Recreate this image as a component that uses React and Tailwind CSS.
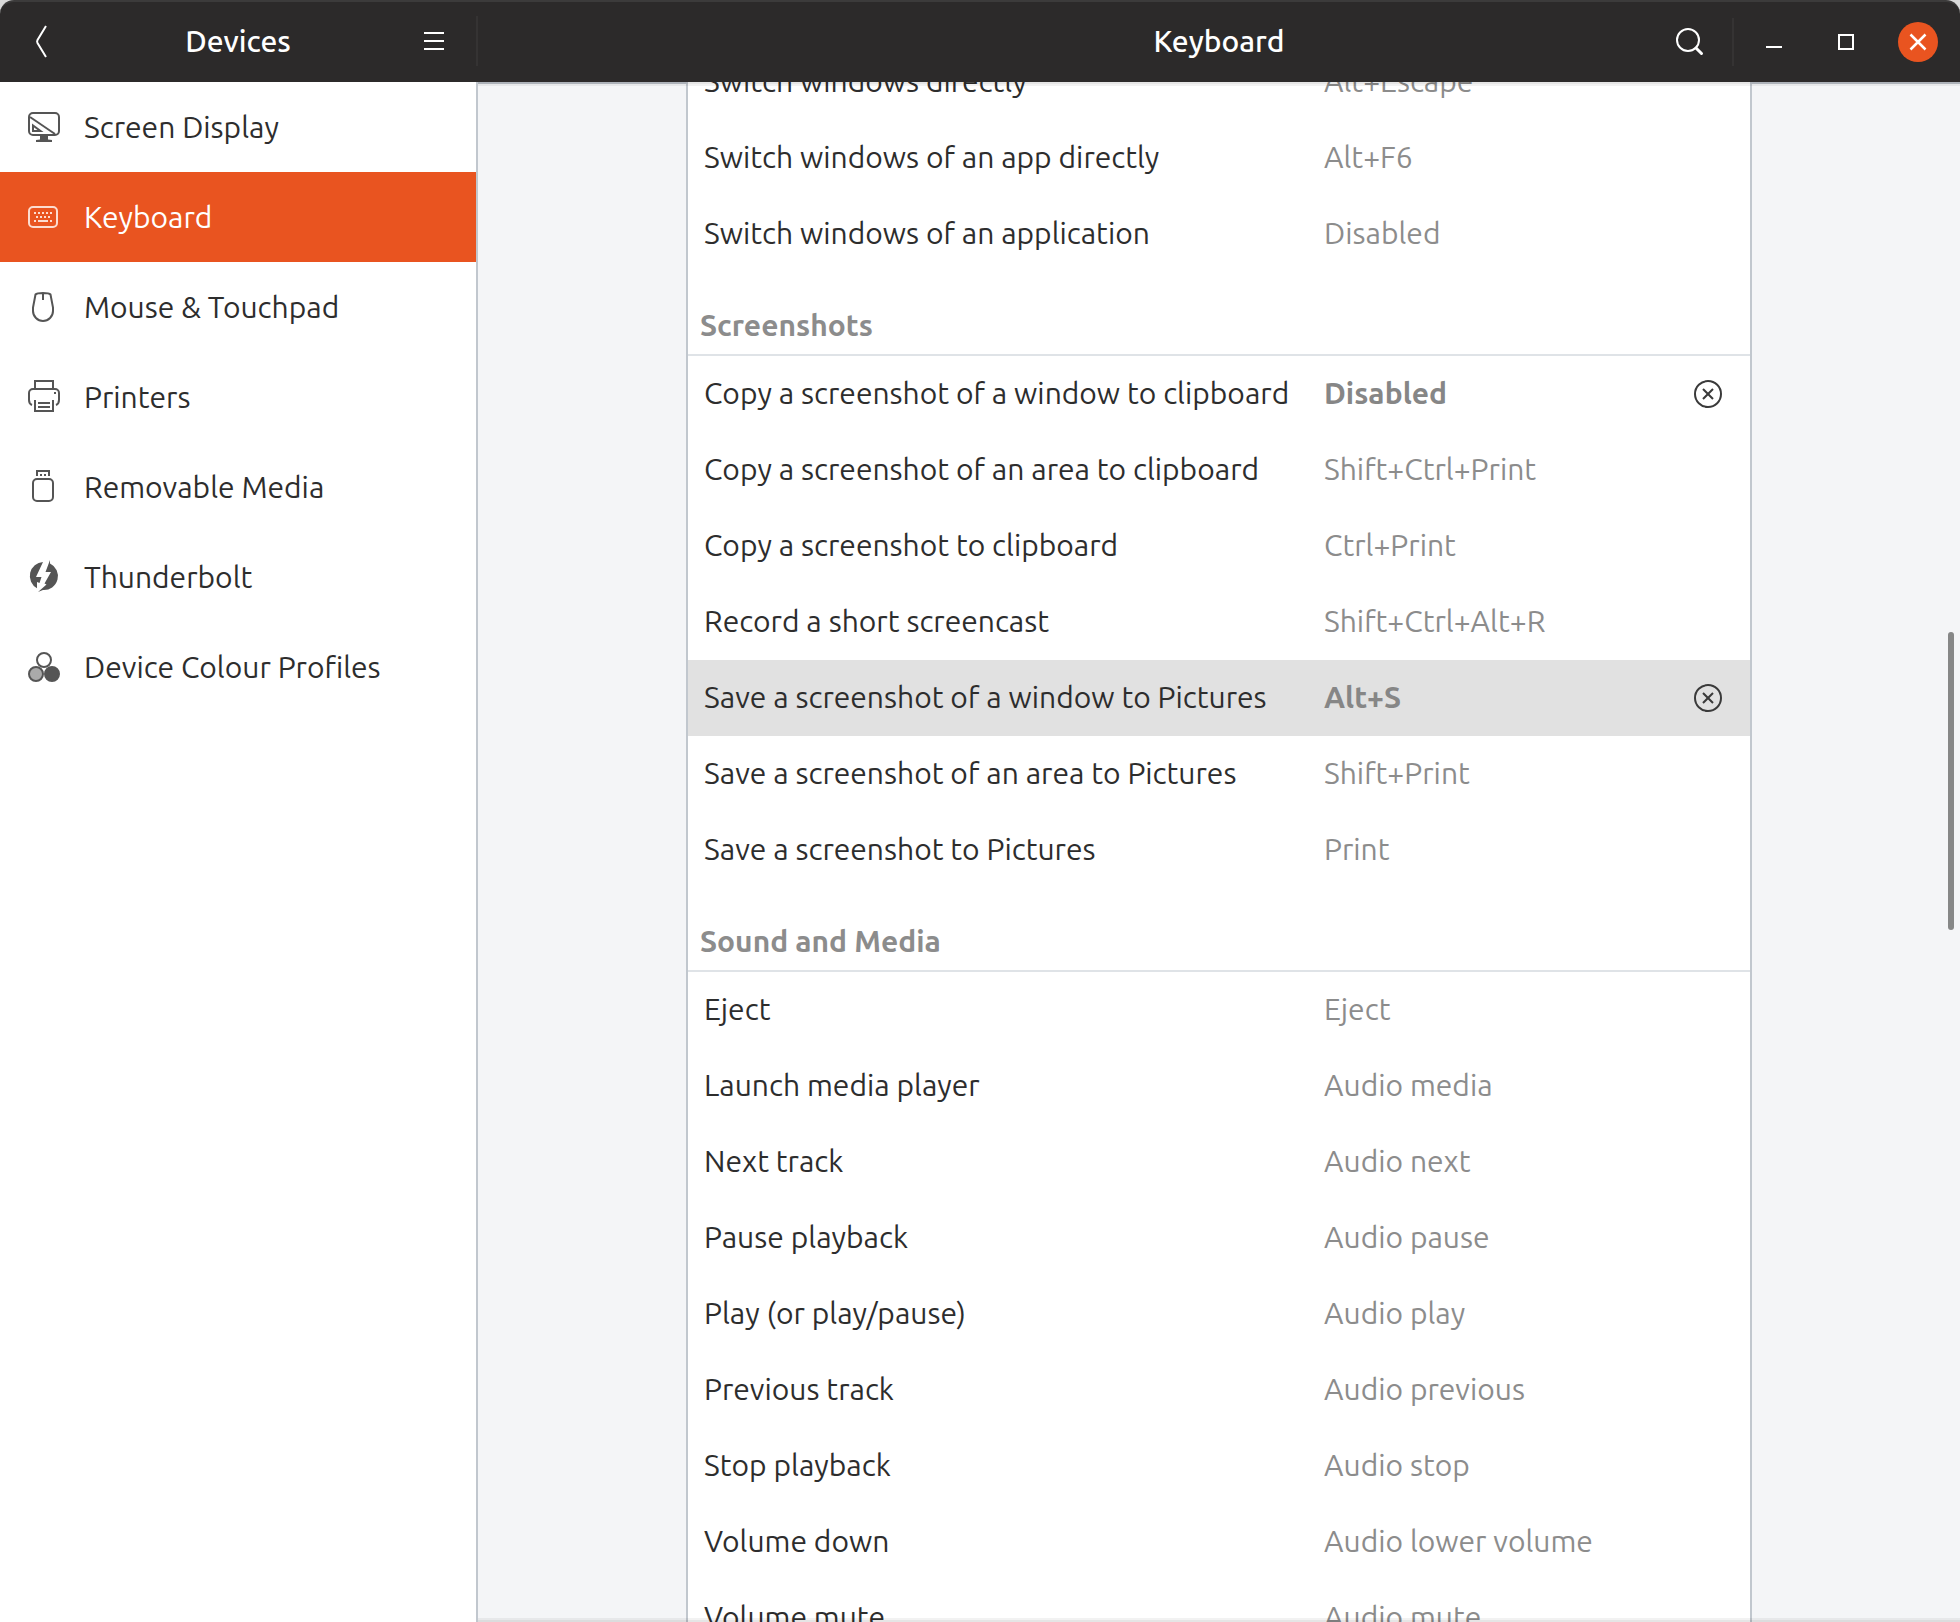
import React, { useEffect, useRef, useState } from "react";

const devices = [
  { name: "Screen Display", Icon: DisplayIcon },
  { name: "Keyboard", Icon: KeyboardIcon },
  { name: "Mouse & Touchpad", Icon: MouseIcon },
  { name: "Printers", Icon: PrinterIcon },
  { name: "Removable Media", Icon: UsbIcon },
  { name: "Thunderbolt", Icon: ThunderboltIcon },
  { name: "Device Colour Profiles", Icon: ColourIcon },
];

const sections = [
  {
    title: null,
    shortcuts: [
      { label: "Switch windows directly", keys: "Alt+Escape" },
      { label: "Switch windows of an app directly", keys: "Alt+F6" },
      { label: "Switch windows of an application", keys: "Disabled" },
    ],
  },
  {
    title: "Screenshots",
    shortcuts: [
      {
        label: "Copy a screenshot of a window to clipboard",
        keys: "Disabled",
        custom: true,
      },
      {
        label: "Copy a screenshot of an area to clipboard",
        keys: "Shift+Ctrl+Print",
      },
      { label: "Copy a screenshot to clipboard", keys: "Ctrl+Print" },
      { label: "Record a short screencast", keys: "Shift+Ctrl+Alt+R" },
      {
        label: "Save a screenshot of a window to Pictures",
        keys: "Alt+S",
        custom: true,
      },
      {
        label: "Save a screenshot of an area to Pictures",
        keys: "Shift+Print",
      },
      { label: "Save a screenshot to Pictures", keys: "Print" },
    ],
  },
  {
    title: "Sound and Media",
    shortcuts: [
      { label: "Eject", keys: "Eject" },
      { label: "Launch media player", keys: "Audio media" },
      { label: "Next track", keys: "Audio next" },
      { label: "Pause playback", keys: "Audio pause" },
      { label: "Play (or play/pause)", keys: "Audio play" },
      { label: "Previous track", keys: "Audio previous" },
      { label: "Stop playback", keys: "Audio stop" },
      { label: "Volume down", keys: "Audio lower volume" },
      { label: "Volume mute", keys: "Audio mute" },
    ],
  },
];

function Icon({ children }) {
  return (
    <svg
      viewBox="0 0 32 32"
      className="w-8 h-8 shrink-0 overflow-visible"
      fill="none"
      stroke="currentColor"
      strokeWidth="2"
      aria-hidden="true"
    >
      {children}
    </svg>
  );
}

function DisplayIcon() {
  return (
    <Icon>
      <rect x="1" y="2" width="30" height="22" rx="4" />
      <path d="M2 6l25 17" />
      <path d="M5 14.5V20h7.5z" />
      <path
        d="M12 25h8v3.5l4 .5v2H8v-2l4-.5z"
        fill="currentColor"
        stroke="none"
      />
    </Icon>
  );
}

function KeyboardIcon() {
  return (
    <Icon>
      <rect x="1" y="6" width="28" height="20" rx="4" />
      <path d="M6 12h2M10 12h2M14 12h2M18 12h2M22 12h2M8 16h2M12 16h2M16 16h2M20 16h2M6 20h2M10 20h10M22 20h2" />
    </Icon>
  );
}

function MouseIcon() {
  return (
    <Icon>
      <path d="M7.5 3.5C8.5 2.4 11 2 15 2s6.5.4 7.5 1.5L25 16.5V20c0 5.5-4.5 10-10 10S5 25.5 5 20v-3.5zM15 2v7" />
    </Icon>
  );
}

function PrinterIcon() {
  return (
    <Icon>
      <path d="M7 8V0h18v8" />
      <path d="M4 24c-2-.8-3-2.5-3-5v-7a4 4 0 0 1 4-4h22a4 4 0 0 1 4 4v7c0 2.5-1 4.2-3 5" />
      <path d="M7 19v11h18V19M10 22h12M10 26h12M26 12h2" />
    </Icon>
  );
}

function UsbIcon() {
  return (
    <Icon>
      <path d="M9 5V0h12v5M12 4h2M16 4h2" />
      <rect x="5" y="8" width="20" height="22" rx="4" />
    </Icon>
  );
}

function ThunderboltIcon() {
  return (
    <Icon>
      <g fill="currentColor" stroke="none">
        <path d="M15 1A14 14 0 0 0 9 27.200V21l2.500 1 2-6H8z" />
        <path d="M22-1l-4.500 12H23l-6.500 11.500 2 1L10 31l5-2A14 14 0 0 0 22 2.400z" />
      </g>
    </Icon>
  );
}

function ColourIcon() {
  return (
    <Icon>
      <circle cx="16" cy="9" r="7" />
      <circle cx="8" cy="23" r="7" fill="#aaaaaa" />
      <circle cx="24" cy="23" r="7" fill="currentColor" />
    </Icon>
  );
}

function ClearIcon() {
  return (
    <svg
      viewBox="0 0 28 28"
      className="w-7 h-7"
      fill="none"
      stroke="currentColor"
      strokeWidth="2"
      aria-hidden="true"
    >
      <circle cx="14" cy="14" r="13" />
      <path d="M9 9l10 10M19 9L9 19" />
    </svg>
  );
}

function HeaderButton({ label, className = "", children }) {
  return (
    <button
      type="button"
      aria-label={label}
      className={`w-10 h-10 flex items-center justify-center rounded-full ${className}`}
    >
      <Icon>{children}</Icon>
    </button>
  );
}

function TitleBar() {
  return (
    <header className="h-[82px] shrink-0 flex bg-[#2c2a2a] text-white rounded-t-[14px] border-t-2 border-[#3c3b3b] font-medium">
      <div className="w-[478px] shrink-0 grid grid-cols-[1fr_auto_1fr] items-center pl-[22px] pr-6 relative">
        <HeaderButton label="Back">
          <path d="M20 0L11.5 14q-.8 1.5 0 3L20 31" />
        </HeaderButton>
        <h1 className="pb-0.5">Devices</h1>
        <HeaderButton label="Menu" className="justify-self-end">
          <path d="M6 7h20M6 15h20M6 23h20" />
        </HeaderButton>
        <span className="absolute right-0 top-[14px] w-[2px] h-[50px] bg-[#353333]" />
      </div>
      <div className="flex-1 grid grid-cols-[1fr_auto_1fr] items-center px-[22px]">
        <h2 className="col-start-2 pb-0.5">Keyboard</h2>
        <div className="justify-self-end flex items-center">
          <HeaderButton label="Search">
            <circle cx="14" cy="14" r="11" />
            <path d="M22 22l5.5 5.5" strokeWidth="3" strokeLinecap="round" />
          </HeaderButton>
          <span className="w-[2px] h-12 bg-[#353333] ml-[22px] mr-5" />
          <div className="flex gap-8">
            <HeaderButton label="Minimise">
              <path d="M8 21h16" />
            </HeaderButton>
            <HeaderButton label="Maximise">
              <path d="M9 9h14v14H9z" />
            </HeaderButton>
            <HeaderButton label="Close" className="bg-[#e95420]">
              <path d="M8.5 8.5l15 15M23.5 8.5l-15 15" strokeWidth="2.5" />
            </HeaderButton>
          </div>
        </div>
      </div>
    </header>
  );
}

function Sidebar({ active, onSelect }) {
  return (
    <nav className="w-[478px] shrink-0 bg-white border-r-2 border-[#c1c7ce]">
      {devices.map(({ name, Icon: DeviceIcon }) => (
        <button
          key={name}
          type="button"
          onClick={() => onSelect(name)}
          className={`w-full h-[90px] flex items-center gap-6 px-7 text-left ${
            active === name ? "bg-[#e95420] text-white" : "text-[#2d2d2d]"
          }`}
        >
          <span
            className={active === name ? "text-[#fcdcd0]" : "text-[#555555]"}
          >
            <DeviceIcon />
          </span>
          {name}
        </button>
      ))}
    </nav>
  );
}

function ShortcutTable({ selected, onSelect }) {
  return (
    <table className="w-full table-fixed border-collapse text-left">
      <colgroup>
        <col className="w-[636px]" />
        <col />
        <col className="w-[84px]" />
      </colgroup>
      {sections.map((section) => (
        <tbody key={section.title || "navigation"}>
          {section.title && (
            <tr className="h-[84px] shadow-[inset_0_-2px_0_#dfe3e7]">
              <th
                colSpan={3}
                scope="colgroup"
                className="pl-3 pt-[22px] font-bold text-[#8c8c8c]"
              >
                {section.title}
              </th>
            </tr>
          )}
          {section.shortcuts.map((shortcut) => (
            <tr
              key={shortcut.label}
              onClick={() => onSelect(shortcut.label)}
              className={`h-[76px] ${
                selected === shortcut.label ? "bg-[#e1e1e1]" : ""
              }`}
            >
              <td className="pl-4 pb-0.5 whitespace-nowrap">
                {shortcut.label}
              </td>
              <td
                className={
                  shortcut.custom
                    ? "pb-0.5 font-bold text-[#868686]"
                    : "pb-0.5 text-[#8c8c8c]"
                }
              >
                {shortcut.keys}
              </td>
              <td className="pl-7">
                {shortcut.custom && (
                  <button
                    type="button"
                    aria-label={`Reset ${shortcut.label}`}
                    className="block text-[#3a3a3a]"
                  >
                    <ClearIcon />
                  </button>
                )}
              </td>
            </tr>
          ))}
        </tbody>
      ))}
    </table>
  );
}

function App() {
  const [device, setDevice] = useState("Keyboard");
  const [selected, setSelected] = useState(
    "Save a screenshot of a window to Pictures",
  );
  const listRef = useRef(null);

  useEffect(() => {
    listRef.current.scrollTop = 38;
  }, []);

  return (
    <div className="h-screen flex flex-col overflow-hidden bg-[#d9d9d9] text-[30px] leading-9 text-[#2d2d2d] font-['Ubuntu','Noto_Sans',sans-serif]">
      <TitleBar />
      <div className="flex-1 min-h-0 flex">
        <Sidebar active={device} onSelect={setDevice} />
        <main className="relative flex-1 min-w-0 flex bg-[#f4f5f7]">
          <div className="flex-1 border-t-2 border-[#c1c7ce]" />
          <div
            ref={listRef}
            className="w-[1066px] bg-white border-x-2 border-[#c1c7ce] overflow-y-auto [scrollbar-width:none]"
          >
            <ShortcutTable selected={selected} onSelect={setSelected} />
          </div>
          <div className="flex-1 border-t-2 border-[#c1c7ce]" />

          {/* Scroll shadows */}
          <div className="absolute inset-x-0 top-0 h-1 border-t-2 border-black/10 bg-black/5 bg-clip-padding pointer-events-none" />
          <div className="absolute inset-x-0 bottom-0 h-1 border-b-2 border-black/10 bg-black/5 bg-clip-padding pointer-events-none" />

          {/* Scroll thumb */}
          <div className="absolute right-[6px] top-[550px] w-[6px] h-[298px] rounded-full bg-[#868787]" />
        </main>
      </div>
    </div>
  );
}

export default App;
